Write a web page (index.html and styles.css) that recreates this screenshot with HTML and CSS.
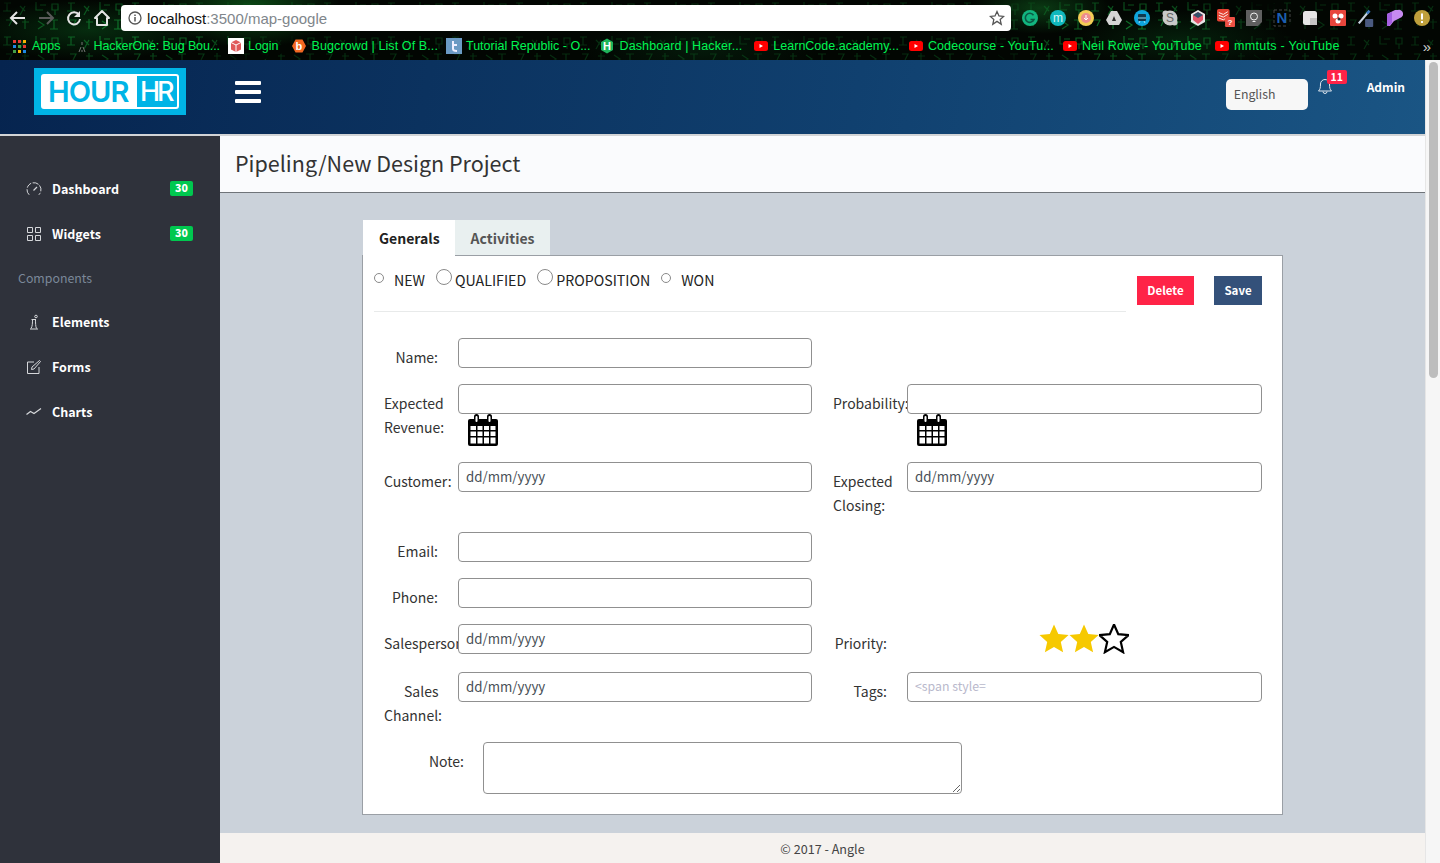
FILE: index.html
```html
<!DOCTYPE html>
<html lang="en">
<head>
  <meta charset="utf-8">
  <title>Pipeling/New Design Project</title>
  <link rel="stylesheet" href="styles.css">
</head>
<body>

<div class="chrome">
  <svg class="matrix" width="1440" height="60">
    <defs>
      <pattern id="rain" width="64" height="34" patternUnits="userSpaceOnUse">
        <path d="M4 3h7M7 3v8M3 11h8M20 6l5 5M25 6l-5 9M36 2v8h7M40 5h6M52 4h6v6h-6zM55 10v5M6 20h6l-3 6M22 22h7M25 19v10M38 21l6 4-6 4M50 20h8M54 20v9M50 29h8" fill="none" stroke="#0f7a2c" stroke-width="1.200"/>
      </pattern>
      <radialGradient id="rainfade" cx=".5" cy=".5" r=".5">
        <stop offset="0" stop-color="#fff"/>
        <stop offset=".6" stop-color="#888"/>
        <stop offset="1" stop-color="#000"/>
      </radialGradient>
      <mask id="rainmask">
        <rect width="1440" height="60" fill="#555"/>
        <ellipse cx="120" cy="30" rx="190" ry="45" fill="url(#rainfade)"/>
        <ellipse cx="1130" cy="30" rx="170" ry="50" fill="url(#rainfade)"/>
      </mask>
    </defs>
    <rect width="1440" height="60" fill="url(#rain)" mask="url(#rainmask)"/>
  </svg>
  <div class="toolbar">
    <svg class="nav-icon" width="28" height="20" viewBox="0 0 28 20"><path d="M21 10H8M13 4l-6 6 6 6" fill="none" stroke="#e4e4e4" stroke-width="2"/></svg>
    <svg class="nav-icon" width="28" height="20" viewBox="0 0 28 20"><path d="M7 10h13M15 4l6 6-6 6" fill="none" stroke="#5a5a5a" stroke-width="2"/></svg>
    <svg class="nav-icon" width="28" height="20" viewBox="0 0 28 20"><path d="M19 7a6 6 0 1 0 1 4" fill="none" stroke="#e4e4e4" stroke-width="2"/><path d="M20 3v6h-6z" fill="#e4e4e4"/></svg>
    <svg class="nav-icon" width="28" height="20" viewBox="0 0 28 20"><path d="M14 3L7 10h2v7h10v-7h2z" fill="none" stroke="#e4e4e4" stroke-width="2" stroke-linejoin="round"/></svg>
    <div class="omnibox">
      <svg width="14" height="14" viewBox="0 0 14 14"><circle cx="7" cy="7" r="6" fill="none" stroke="#555" stroke-width="1.3"/><path d="M7 6v4.5M7 3.5v1.5" stroke="#555" stroke-width="1.5"/></svg>
      <span class="url">localhost<span class="url-rest">:3500/map-google</span></span>
      <svg class="star-bm" width="16" height="16" viewBox="0 0 16 16"><path d="M8 1.5l2 4.4 4.7.5-3.5 3.2 1 4.7L8 11.4l-4.2 2.9 1-4.7L1.300 6.400 6 5.900z" fill="none" stroke="#555" stroke-width="1.300"/></svg>
    </div>
    <div class="extensions">
      <svg width="18" height="18" viewBox="0 0 18 18"><circle cx="9" cy="9" r="8" fill="#12b57f"/><path d="M12.500 6.200A4.500 4.500 0 1 0 13 10.500H9.500" fill="none" stroke="#0a5a45" stroke-width="1.600"/></svg>
      <svg width="18" height="18" viewBox="0 0 18 18"><circle cx="9" cy="9" r="8" fill="#10b8bd"/><text x="9" y="12.500" class="ext-letter" fill="#d8f6f6">m</text></svg>
      <svg width="18" height="18" viewBox="0 0 18 18"><circle cx="9" cy="9" r="8" fill="#f3cd55"/><circle cx="9" cy="9" r="5" fill="#ee8d8d"/><path d="M9 6v5M7 9l2 2 2-2" fill="none" stroke="#fff" stroke-width="1"/></svg>
      <svg width="18" height="18" viewBox="0 0 18 18"><path d="M6 2h6l5 9-3 5H4l-3-5z" fill="#d5d5d5"/><path d="M9 7l2 5H7z" fill="#333"/></svg>
      <svg width="18" height="18" viewBox="0 0 18 18"><circle cx="9" cy="9" r="8" fill="#0ea5dd"/><rect x="5" y="5" width="8" height="7" rx="1" fill="#10394f"/><path d="M5 9h8M6 14l1-2M12 14l-1-2" stroke="#9adcf3"/></svg>
      <svg width="18" height="18" viewBox="0 0 18 18"><circle cx="9" cy="9" r="7.500" fill="#c9c9c9"/><circle cx="4.500" cy="4.500" r="3" fill="#c9c9c9"/><circle cx="13.500" cy="13.500" r="3" fill="#c9c9c9"/><text x="9" y="13" class="ext-letter" fill="#666">S</text></svg>
      <svg width="18" height="18" viewBox="0 0 18 18"><path d="M9 1l7 4v8l-7 4-7-4V5z" fill="#e7e7e7"/><path d="M4 6l5-3 5 3v5l-5 4-5-4z" fill="#e0566b"/><path d="M4 6l5-3 5 3-5 3z" fill="#34506a"/></svg>
      <svg width="20" height="20" viewBox="0 0 20 20"><rect x="0" y="0" width="14" height="14" rx="2" fill="#e44232"/><path d="M2 4l5 2 5-3M2 7l5 2 5-3M2 10l5 2 5-3" fill="none" stroke="#fff"/><rect x="9" y="9" width="11" height="11" rx="1" fill="#ee5044"/><text x="14.500" y="18" class="ext-q">?</text></svg>
      <svg width="18" height="18" viewBox="0 0 18 18"><path d="M1 1h16v12l-4 4H1z" fill="#5f5f5f"/><circle cx="9" cy="7.500" r="3.500" fill="none" stroke="#eee"/><path d="M7.500 12.500h3" stroke="#eee"/></svg>
      <svg width="18" height="18" viewBox="0 0 18 18"><path d="M1 1h16v13M1 1v16h13" fill="none" stroke="#444" stroke-dasharray="3 2"/><text x="9" y="14" class="ext-n">N</text></svg>
      <svg width="18" height="18" viewBox="0 0 18 18"><rect x="2" y="2" width="14" height="14" rx="2.500" fill="#e6e6e6"/><rect x="9" y="9" width="7" height="7" fill="#c4c4c4"/></svg>
      <svg width="18" height="18" viewBox="0 0 18 18"><rect x="1" y="1" width="16" height="16" rx="1" fill="#e8453c"/><circle cx="6" cy="7" r="2.500" fill="#fff"/><circle cx="12" cy="7" r="2.500" fill="#fff"/><circle cx="9" cy="12" r="2.500" fill="#fff"/><circle cx="10" cy="10" r="1.500" fill="#333"/></svg>
      <svg width="20" height="20" viewBox="0 0 20 20"><path d="M2 16L12 4" stroke="#c9d4e2" stroke-width="2.500"/><path d="M11 5l3-3" stroke="#3f7ac0" stroke-width="3"/><rect x="9" y="11" width="9" height="9" rx="1" fill="#4a5a80"/></svg>
      <svg width="18" height="18" viewBox="0 0 18 18"><path d="M2 5l8-4h3a4 4 0 0 1 2 8l-6 3-4 5H2z" fill="#c78bf0"/><path d="M2 5l5-2v11l-3 3H2z" fill="#a45fe0"/></svg>
      <svg width="18" height="18" viewBox="0 0 18 18"><circle cx="9" cy="9" r="8" fill="#bfa03c"/><path d="M9 4.500v6M9 12v2" stroke="#fff" stroke-width="2"/></svg>
    </div>
  </div>

  <div class="bookmarks">
    <a class="bm bm-apps"><svg width="13" height="13" viewBox="0 0 13 13"><path d="M0 0h3v3H0z" fill="#e53935"/><path d="M5 0h3v3H5z" fill="#e53935"/><path d="M10 0h3v3h-3z" fill="#f4b400"/><path d="M0 5h3v3H0z" fill="#1e88e5"/><path d="M5 5h3v3H5z" fill="#43a047"/><path d="M10 5h3v3h-3z" fill="#e53935"/><path d="M0 10h3v3H0z" fill="#43a047"/><path d="M5 10h3v3H5z" fill="#f4b400"/><path d="M10 10h3v3h-3z" fill="#1e88e5"/></svg>Apps</a>
    <a class="bm bm-h1"><svg width="14" height="16" viewBox="0 0 14 16"><path d="M6 4v3M3 14l2-5M9 14L7 9M6 12v2" stroke="#777" stroke-width="1" fill="none"/></svg>HackerOne: Bug Bou...</a>
    <a class="bm bm-login"><svg width="16" height="16" viewBox="0 0 16 16"><rect width="16" height="16" fill="#fff"/><path d="M8 2l5 2.500v7L8 14l-5-2.500v-7z" fill="#e05a5a"/><path d="M8 7v7M3 4.500L8 7l5-2.500" stroke="#fff" fill="none"/></svg>Login</a>
    <a class="bm bm-bc"><svg width="14" height="16" viewBox="0 0 14 16"><path d="M3.500 1.500h7L14 8l-3.500 6.500h-7L0 8z" fill="#f26822"/><text x="7" y="12" class="ext-b">b</text></svg>Bugcrowd | List Of B...</a>
    <a class="bm bm-tr"><svg width="16" height="16" viewBox="0 0 16 16"><rect width="16" height="16" fill="#6b9ac4"/><path d="M7 3v8q0 2 4 2M7 7h4" stroke="#eef" stroke-width="2" fill="none"/></svg>Tutorial Republic - O...</a>
    <a class="bm bm-hs"><svg width="14" height="16" viewBox="0 0 14 16"><path d="M7 .500l6 3.500v8l-6 3.500L1 12V4z" fill="#1fb45a"/><text x="7" y="12" class="ext-b">H</text></svg>Dashboard | Hacker...</a>
    <a class="bm bm-lc"><svg class="yt" width="14" height="10" viewBox="0 0 14 10"><rect width="14" height="10" rx="2.500" fill="#f00"/><path d="M5.500 3v4L9 5z" fill="#fff"/></svg>LearnCode.academy...</a>
    <a class="bm bm-cc"><svg class="yt" width="14" height="10" viewBox="0 0 14 10"><rect width="14" height="10" rx="2.500" fill="#f00"/><path d="M5.500 3v4L9 5z" fill="#fff"/></svg>Codecourse - YouTu...</a>
    <a class="bm bm-nr"><svg class="yt" width="14" height="10" viewBox="0 0 14 10"><rect width="14" height="10" rx="2.500" fill="#f00"/><path d="M5.500 3v4L9 5z" fill="#fff"/></svg>Neil Rowe - YouTube</a>
    <a class="bm bm-mm"><svg class="yt" width="14" height="10" viewBox="0 0 14 10"><rect width="14" height="10" rx="2.500" fill="#f00"/><path d="M5.500 3v4L9 5z" fill="#fff"/></svg>mmtuts - YouTube</a>
    <span class="bm-more">»</span>
  </div>
</div>

<div class="shell">
  <div class="page">
    <header class="topbar">
      <div class="logo"><div class="logo-inner"><span class="logo-hour">HOUR</span><span class="logo-hr">HR</span></div></div>
      <div class="burger"><i></i><i></i><i></i></div>
      <div class="top-right">
        <div class="lang">English</div>
        <div class="bell">
          <svg width="16" height="17" viewBox="0 0 16 17"><path d="M8 1.500a4.500 4.500 0 0 0-4.500 4.500c0 4-.5 5.500-2 7h13c-1.500-1.500-2-3-2-7A4.500 4.500 0 0 0 8 1.500zM6 13.500a2 2 0 0 0 4 0" fill="none" stroke="#dfe6ee" stroke-width="1"/></svg>
          <span class="bell-count">11</span>
        </div>
        <div class="admin">Admin</div>
      </div>
    </header>

    <div class="below">
      <nav class="sidebar">
        <a class="side-item">
          <svg width="16" height="16" viewBox="0 0 16 16"><path d="M3.200 13.800a7 7 0 1 1 9.600 0" fill="none" stroke="#d5d7da" stroke-dasharray="6 1.500"/><path d="M7.500 9.500l3.500-3.500" stroke="#d5d7da" stroke-width="1.200"/></svg>
          <span>Dashboard</span><b class="side-badge">30</b>
        </a>
        <a class="side-item">
          <svg width="16" height="16" viewBox="0 0 16 16"><path d="M1.500 1.500h5v5h-5zM9.500 1.500h5v5h-5zM1.500 9.500h5v5h-5zM9.500 9.500h5v5h-5z" fill="none" stroke="#d5d7da"/></svg>
          <span>Widgets</span><b class="side-badge">30</b>
        </a>
        <div class="side-head">Components</div>
        <a class="side-item">
          <svg width="16" height="16" viewBox="0 0 16 16"><path d="M4 15h8M5 14.500c1.500-2 1.500-6 1.500-9M10.500 14.500c-1-2-1-6-1-9M5.500 5.500h4.500" fill="none" stroke="#d5d7da"/><circle cx="10" cy="2.500" r="1.300" fill="none" stroke="#d5d7da"/></svg>
          <span>Elements</span>
        </a>
        <a class="side-item">
          <svg width="16" height="16" viewBox="0 0 16 16"><path d="M8 3H1.500v11.500H13V8M6 8l7.500-6.500 1 1L8 10l-2.500.5z" fill="none" stroke="#d5d7da"/></svg>
          <span>Forms</span>
        </a>
        <a class="side-item">
          <svg width="16" height="16" viewBox="0 0 16 16"><path d="M.500 10.500l4-3 3.500 2 7-5" fill="none" stroke="#d5d7da" stroke-width="1.200"/></svg>
          <span>Charts</span>
        </a>
      </nav>

      <div class="content">
        <div class="title-bar"><h1>Pipeling/New Design Project</h1></div>
        <main class="main">
          <div class="tabs">
            <a class="tab tab-active">Generals</a>
            <a class="tab">Activities</a>
          </div>
          <div class="panel">
            <div class="panel-top">
              <div class="stages">
                <input type="radio" class="radio-sm" name="stage"><label class="stage-new">NEW</label>
                <input type="radio" class="radio-lg" name="stage"><label>QUALIFIED</label>
                <input type="radio" class="radio-lg" name="stage"><label>PROPOSITION</label>
                <input type="radio" class="radio-sm" name="stage"><label class="stage-new">WON</label>
              </div>
              <button class="btn btn-delete">Delete</button>
              <button class="btn btn-save">Save</button>
            </div>

            <div class="form-grid">
              <label class="lbl lbl-right">Name:</label>
              <input class="field" type="text">
              <span></span><span></span><span></span>

              <label class="lbl">Expected Revenue:</label>
              <div><input class="field" type="text"><svg class="cal" width="30" height="32" viewBox="0 0 30 32"><use href="#calendar"/></svg></div>
              <span></span>
              <label class="lbl lbl-flush">Probability:</label>
              <div><input class="field" type="text"><svg class="cal" width="30" height="32" viewBox="0 0 30 32"><use href="#calendar"/></svg></div>

              <label class="lbl">Customer:</label>
              <input class="field" type="text" value="dd/mm/yyyy">
              <span></span>
              <label class="lbl lbl-flush">Expected Closing:</label>
              <input class="field" type="text" value="dd/mm/yyyy">

              <label class="lbl lbl-right">Email:</label>
              <input class="field" type="text">
              <span></span><span></span><span></span>

              <label class="lbl lbl-right">Phone:</label>
              <input class="field" type="text">
              <span></span><span></span><span></span>

              <label class="lbl lbl-nowrap">Salesperson:</label>
              <input class="field" type="text" value="dd/mm/yyyy">
              <span></span>
              <label class="lbl lbl-right">Priority:</label>
              <div class="stars">
                <svg width="30" height="30" viewBox="0 0 30 30"><use href="#star" fill="#f6c900"/></svg>
                <svg width="30" height="30" viewBox="0 0 30 30"><use href="#star" fill="#f6c900"/></svg>
                <svg width="30" height="30" viewBox="0 0 30 30"><use href="#star" fill="#fff" stroke="#000" stroke-width="2.200"/></svg>
              </div>

              <label class="lbl lbl-indent">Sales Channel:</label>
              <input class="field" type="text" value="dd/mm/yyyy">
              <span></span>
              <label class="lbl lbl-right">Tags:</label>
              <input class="field field-tags" type="text" placeholder="&lt;span style=">
            </div>

            <div class="note-row">
              <label class="lbl lbl-note">Note:</label>
              <textarea class="note"></textarea>
            </div>
          </div>
        </main>
        <footer class="footer">© 2017 - Angle</footer>
      </div>
    </div>
  </div>
  <div class="scrollbar"><div class="thumb"></div></div>
</div>

<svg class="defs" width="0" height="0">
  <defs>
    <g id="calendar">
      <path d="M2 5h26a2 2 0 0 1 2 2v23a2 2 0 0 1-2 2H2a2 2 0 0 1-2-2V7a2 2 0 0 1 2-2z" fill="#000"/>
      <path d="M2.500 12h5.500v4H2.500zM9.500 12h5v4h-5zM16 12h5v4h-5zM22.500 12h5v4h-5zM2.500 17.500h5.500v4.500H2.500zM9.500 17.500h5v4.500h-5zM16 17.500h5v4.500h-5zM22.500 17.500h5v4.500h-5zM2.500 23.500h5.500v6H2.500zM9.500 23.500h5v6h-5zM16 23.500h5v6h-5zM22.500 23.500h5v6h-5z" fill="#fff"/>
      <rect x="6" y="0" width="5" height="10" rx="2.500" fill="#000"/>
      <rect x="19" y="0" width="5" height="10" rx="2.500" fill="#000"/>
      <rect x="7.500" y="2" width="2" height="6" rx="1" fill="#fff"/>
      <rect x="20.500" y="2" width="2" height="6" rx="1" fill="#fff"/>
    </g>
    <path id="star" d="M15 .5l4.300 9.600 10.300 1-7.800 6.900 2.300 10.200L15 22.900 5.900 28.200l2.300-10.200L.5 11.100l10.300-1z"/>
  </defs>
</svg>

</body>
</html>
```

FILE: styles.css
```css
* {
  box-sizing: border-box;
}

html, body {
  margin: 0;
  height: 100%;
  overflow: hidden;
}

body {
  display: flex;
  flex-direction: column;
  font-family: "Noto Sans CJK JP", "Noto Sans", sans-serif;
  font-size: 14px;
  color: #333;
  background: #fff;
}

/* browser chrome */
.chrome {
  position: relative;
  height: 60px;
  flex: none;
  font-family: "Liberation Sans", sans-serif;
  background:
    radial-gradient(ellipse 90px 40px at 250px 8px, rgba(20, 140, 40, .5), transparent),
    radial-gradient(ellipse 120px 30px at 90px 30px, rgba(10, 90, 30, .45), transparent),
    radial-gradient(ellipse 70px 26px at 1040px 8px, rgba(20, 120, 40, .45), transparent),
    radial-gradient(ellipse 110px 30px at 1180px 40px, rgba(10, 80, 30, .35), transparent),
    radial-gradient(ellipse 120px 30px at 700px 50px, rgba(10, 70, 30, .3), transparent),
    #020602;
}

.matrix {
  position: absolute;
  left: 0;
  top: 0;
}

.toolbar {
  position: relative;
  height: 36px;
  display: flex;
  align-items: center;
  padding-left: 4px;
}

.nav-icon {
  flex: none;
}

.omnibox {
  width: 890px;
  height: 26px;
  margin-left: 5px;
  background: #fff;
  border-radius: 4px;
  display: flex;
  align-items: center;
  padding: 0 6px 0 7px;
}

.url {
  margin-left: 5px;
  font-size: 15px;
  color: #111;
}

.url-rest {
  color: #80868b;
}

.star-bm {
  margin-left: auto;
}

.extensions {
  display: flex;
  align-items: center;
  margin-left: 5px;
}

.extensions svg {
  width: 28px;
  padding: 0 5px;
  flex: none;
}

.ext-letter {
  font-size: 12px;
  text-anchor: middle;
}

.ext-q {
  font-size: 9px;
  font-weight: bold;
  fill: #fff;
  text-anchor: middle;
}

.ext-n {
  font-size: 15px;
  font-weight: bold;
  fill: #1c5fb0;
  text-anchor: middle;
}

.ext-b {
  font-size: 11px;
  font-weight: bold;
  fill: #fff;
  text-anchor: middle;
}

.bookmarks {
  position: relative;
  height: 24px;
  margin-top: -2px;
  display: flex;
  align-items: center;
  font-size: 12.5px;
  color: #00f552;
  white-space: nowrap;
}

.bm {
  display: flex;
  align-items: center;
}

.bm svg {
  margin-right: 5px;
  flex: none;
}

.bm-apps { margin-left: 13px; }
.bm-apps svg { margin-right: 6px; }
.bm-h1 { margin-left: 15px; letter-spacing: -.1px; }
.bm-h1 svg { margin-right: 4px; }
.bm-login { margin-left: 8px; }
.bm-login svg { margin-right: 4px; }
.bm-bc { margin-left: 13px; letter-spacing: .1px; }
.bm-bc svg { margin-right: 6px; }
.bm-tr { margin-left: 8px; }
.bm-tr svg { margin-right: 4px; }
.bm-hs { margin-left: 9px; letter-spacing: .1px; }
.bm-hs svg { margin-right: 6px; }
.bm-lc { margin-left: 12px; }
.bm-cc { margin-left: 10px; letter-spacing: .1px; }
.bm-nr { margin-left: 9px; letter-spacing: .16px; }
.bm-mm { margin-left: 13px; letter-spacing: .3px; }

.bm-more {
  margin-left: auto;
  margin-right: 9px;
  color: #cfcfcf;
  font-size: 15px;
}

/* page frame */
.shell {
  flex: 1;
  display: flex;
  min-height: 0;
}

.page {
  flex: 1;
  display: flex;
  flex-direction: column;
  min-width: 0;
}

.scrollbar {
  width: 15px;
  flex: none;
  padding: 2px 2px 0 3px;
  background: #f6f6f6;
  border-left: 1px solid #e6e6e6;
}

.thumb {
  height: 316px;
  background: #bdbdbd;
  border-radius: 5px;
}

/* top header */
.topbar {
  height: 76px;
  flex: none;
  display: flex;
  align-items: flex-start;
  padding-left: 34px;
  background: linear-gradient(100deg, #06244f 0%, #10406f 60%, #1a5584 100%);
  border-bottom: 2px solid #d2d4d6;
}

.logo {
  width: 152px;
  height: 47px;
  margin-top: 8px;
  padding: 6px 7px;
  background: #00b4e6;
}

.logo-inner {
  height: 100%;
  display: flex;
  align-items: stretch;
  border: 2px solid #fff;
  border-radius: 3px;
  font-family: "Inter", sans-serif;
  font-size: 29px;
  font-weight: 600;
  line-height: 31px;
}

.logo-hour {
  width: 94px;
  padding-left: 5px;
  background: #fff;
  color: #00b4e6;
  letter-spacing: -.9px;
}

.logo-hr {
  padding-left: 3px;
  color: #fff;
  font-weight: 500;
  font-size: 27px;
  letter-spacing: -3px;
}

.burger {
  width: 26px;
  margin: 21px 0 0 49px;
}

.burger i {
  display: block;
  height: 4px;
  margin-bottom: 5px;
  background: #fff;
  border-radius: 1px;
}

.top-right {
  margin-left: auto;
  display: flex;
  align-items: flex-start;
}

.lang {
  width: 82px;
  height: 31px;
  margin-top: 19px;
  padding-left: 8px;
  background: #f7f7f7;
  border-radius: 5px;
  font-size: 12.3px;
  line-height: 30px;
  color: #555;
}

.bell {
  position: relative;
  width: 16px;
  height: 17px;
  margin: 18px 0 0 9px;
}

.bell svg {
  display: block;
}

.bell-count {
  position: absolute;
  left: 10px;
  top: -8px;
  width: 20px;
  height: 14px;
  background: #ff2347;
  border-radius: 2px;
  color: #fff;
  font-size: 10.5px;
  font-weight: 700;
  line-height: 14px;
  text-align: center;
}

.admin {
  margin: 17px 20px 0 34px;
  color: #fff;
  font-size: 12px;
  font-weight: 700;
  line-height: 20px;
}

/* sidebar */
.below {
  flex: 1;
  display: flex;
  min-height: 0;
}

.sidebar {
  width: 220px;
  flex: none;
  padding-top: 30px;
  background: #2f323b;
}

.side-item {
  height: 45px;
  display: flex;
  align-items: center;
  padding: 0 27px 0 26px;
  color: #fff;
  font-size: 12.5px;
  font-weight: 700;
}

.side-item svg {
  flex: none;
  margin-right: 10px;
}

.side-badge {
  margin-left: auto;
  width: 23px;
  height: 15px;
  margin-top: -1px;
  background: #00c84f;
  border-radius: 2px;
  font-size: 10.5px;
  line-height: 14px;
  text-align: center;
}

.side-head {
  height: 43px;
  padding-left: 18px;
  color: #7b8899;
  font-size: 12.35px;
  line-height: 44px;
}

/* content */
.content {
  flex: 1;
  display: flex;
  flex-direction: column;
  min-width: 0;
}

.title-bar {
  height: 57px;
  flex: none;
  padding-left: 15px;
  background: #fafbfd;
  border-bottom: 1px solid #6f7479;
}

.title-bar h1 {
  margin: 0;
  font-size: 21.5px;
  font-weight: 400;
  line-height: 53px;
  color: #333;
}

.main {
  flex: 1;
  padding: 27px 142px 0;
  background: #cbd2da;
}

.tabs {
  display: flex;
  height: 35px;
}

.tab {
  padding: 0 16px;
  font-size: 14px;
  font-weight: 700;
  line-height: 37px;
  color: #555;
  background: #e9f0f0;
}

.tab-active {
  position: relative;
  margin-left: 1px;
  margin-bottom: -1px;
  padding-right: 15px;
  background: #fff;
  color: #222;
}

.panel {
  width: 921px;
  padding: 0 20px 20px 11px;
  background: #fff;
  border: 1px solid #9a9fa5;
}

.panel-top {
  display: flex;
  align-items: flex-start;
  margin-bottom: 26px;
}

.stages {
  width: 752px;
  height: 56px;
  display: flex;
  align-items: flex-start;
  padding-top: 13px;
  border-bottom: 1px solid #e8eaea;
  font-size: 14.2px;
  line-height: 24px;
  color: #222;
}

.stages label {
  margin-top: -1px;
}

.stages input {
  appearance: none;
  flex: none;
  margin: 0;
  background: #fff;
  border: 1px solid #8a8a8a;
  border-radius: 50%;
}

.radio-sm {
  width: 10px;
  height: 10px;
  margin: 4px 0 0 11px !important;
}

.radio-sm:first-child {
  margin-left: 0 !important;
}

.radio-lg {
  width: 16px;
  height: 16px;
  margin: 0 3px 0 11px !important;
}

.stage-new {
  margin-left: 10px;
}

.btn {
  height: 29px;
  margin-top: 20px;
  padding: 0 0 2px;
  border: 0;
  color: #fff;
  font-family: inherit;
  font-size: 11.5px;
  font-weight: 700;
}

.btn-delete {
  width: 57px;
  margin-left: 11px;
  background: #ff2347;
}

.btn-save {
  width: 48px;
  margin-left: 20px;
  background: #34517a;
}

.form-grid {
  display: grid;
  grid-template-columns: 84px 354px 21px 74px 355px;
  grid-template-rows: 46px 78px 70px 46px 46px 48px 70px;
}

.lbl {
  padding: 7px 0 0 10px;
  font-size: 14px;
  line-height: 24px;
  color: #333;
}

.lbl-right {
  padding-left: 0;
  padding-right: 20px;
  text-align: right;
}

.lbl-flush {
  padding-left: 0;
}

.lbl-nowrap {
  white-space: nowrap;
}

.lbl-indent {
  text-indent: 20px;
}

.field {
  display: block;
  width: 100%;
  height: 30px;
  padding: 0 7px 2px;
  background: #fff;
  border: 1px solid #909090;
  border-radius: 4px;
  font-family: inherit;
  font-size: 13.3px;
  color: #495057;
  outline: 0;
}

.field-tags {
  font-size: 12.3px;
}

.field-tags::placeholder {
  color: #b9b9cc;
  opacity: 1;
}

.cal {
  display: block;
  margin-left: 10px;
}

.stars {
  display: flex;
  margin-left: 132px;
}

.note-row {
  display: flex;
  align-items: flex-start;
}

.lbl-note {
  width: 90px;
  padding: 7px 0 0;
  text-align: right;
}

.note {
  display: block;
  width: 479px;
  height: 52px;
  margin-left: 19px;
  border: 1px solid #909090;
  border-radius: 4px;
  outline: 0;
}

.footer {
  height: 30px;
  flex: none;
  background: #f5f2ef;
  font-size: 12.6px;
  line-height: 32px;
  text-align: center;
  color: #444;
}

.defs {
  position: absolute;
}
```
